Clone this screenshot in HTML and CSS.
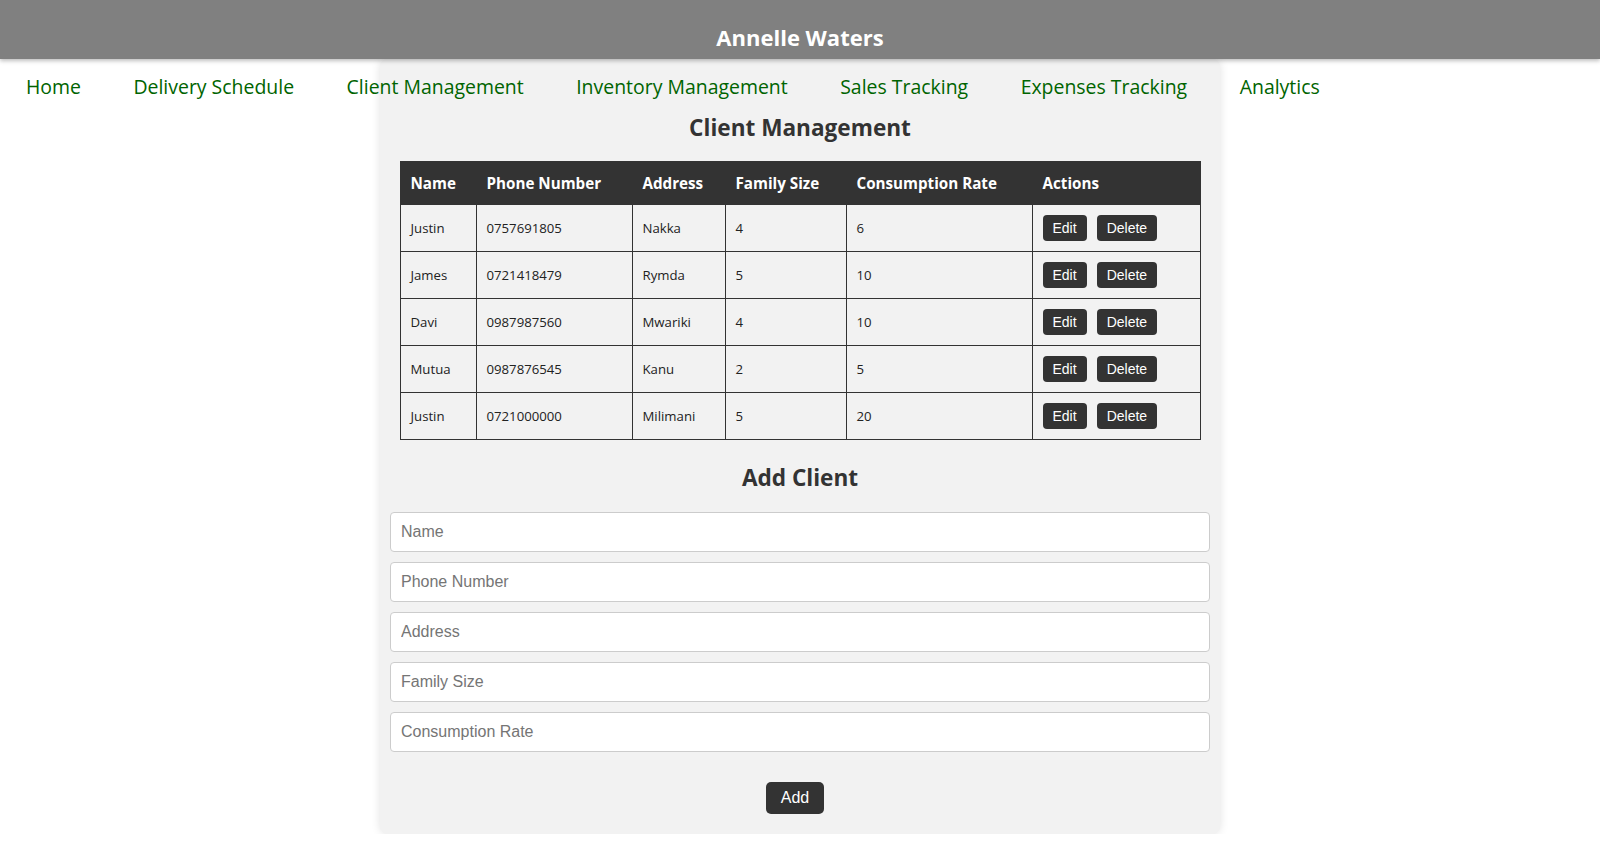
FILE: index.html
```html
<!DOCTYPE html>
<html lang="en">
<head>
<meta charset="utf-8">
<title>Annelle Waters - Client Management</title>
<link rel="stylesheet" href="styles.css">
</head>
<body>
<header class="site-header">
  <h1 class="site-title">Annelle Waters</h1>
</header>
<nav class="main-nav">
  <a href="#" class="nav-link">Home</a>
  <a href="#" class="nav-link">Delivery Schedule</a>
  <a href="#" class="nav-link">Client Management</a>
  <a href="#" class="nav-link">Inventory Management</a>
  <a href="#" class="nav-link">Sales Tracking</a>
  <a href="#" class="nav-link">Expenses Tracking</a>
  <a href="#" class="nav-link">Analytics</a>
</nav>
<main class="card">
  <h2 class="section-title">Client Management</h2>
  <table class="client-table">
    <colgroup>
      <col class="c-name"><col class="c-phone"><col class="c-addr"><col class="c-family"><col class="c-rate"><col class="c-actions">
    </colgroup>
    <thead>
      <tr><th>Name</th><th>Phone Number</th><th>Address</th><th>Family Size</th><th>Consumption Rate</th><th>Actions</th></tr>
    </thead>
    <tbody>
      <tr><td>Justin</td><td>0757691805</td><td>Nakka</td><td>4</td><td>6</td><td><button class="btn-small">Edit</button><button class="btn-small">Delete</button></td></tr>
      <tr><td>James</td><td>0721418479</td><td>Rymda</td><td>5</td><td>10</td><td><button class="btn-small">Edit</button><button class="btn-small">Delete</button></td></tr>
      <tr><td>Davi</td><td>0987987560</td><td>Mwariki</td><td>4</td><td>10</td><td><button class="btn-small">Edit</button><button class="btn-small">Delete</button></td></tr>
      <tr><td>Mutua</td><td>0987876545</td><td>Kanu</td><td>2</td><td>5</td><td><button class="btn-small">Edit</button><button class="btn-small">Delete</button></td></tr>
      <tr><td>Justin</td><td>0721000000</td><td>Milimani</td><td>5</td><td>20</td><td><button class="btn-small">Edit</button><button class="btn-small">Delete</button></td></tr>
    </tbody>
  </table>
  <h2 class="section-title add-title">Add Client</h2>
  <form class="client-form">
    <input class="field" type="text" placeholder="Name">
    <input class="field" type="text" placeholder="Phone Number">
    <input class="field" type="text" placeholder="Address">
    <input class="field" type="text" placeholder="Family Size">
    <input class="field" type="text" placeholder="Consumption Rate">
    <div class="form-actions"><button type="button" class="btn-add">Add</button></div>
  </form>
</main>
</body>
</html>
```
FILE: styles.css
```css
* { box-sizing: border-box; }
body {
  margin: 0;
  font-family: "Open Sans", "Noto Sans", sans-serif;
  color: #333;
  background: #fff;
}
.site-header {
  background: #808080;
  color: #fff;
  text-align: center;
  height: 59px;
  padding-top: 21px;
  box-shadow: 0 2px 4px rgba(0,0,0,0.25);
  position: relative;
  z-index: 1;
}
.site-title {
  margin: 0;
  font-size: 22px;
  line-height: 32px;
  font-weight: 700;
}
.main-nav {
  position: absolute;
  top: 59px;
  left: 0;
  display: flex;
  gap: 52.5px;
  padding: 14px 0 0 26px;
  z-index: 2;
}
.nav-link {
  color: #006400;
  text-decoration: none;
  font-size: 19.45px;
  line-height: 27px;
}
.card {
  width: 840px;
  margin: 0 auto;
  background: #f2f2f2;
  border-radius: 8px;
  padding: 10px 10px 20px;
  box-shadow: 0 0 10px rgba(0,0,0,0.12);
}
.section-title {
  text-align: center;
  font-size: 22.6px;
  line-height: 32px;
  margin: 43px 0 17px;
  color: #333;
}
.add-title { margin: 22px 0 18px; }
.client-table {
  width: 800px;
  margin: 0 auto;
  border-collapse: collapse;
  table-layout: fixed;
}
.c-name { width: 76px; }
.c-phone { width: 156px; }
.c-addr { width: 93px; }
.c-family { width: 121px; }
.c-rate { width: 186px; }
.c-actions { width: 168px; }
.client-table th, .client-table td {
  border: 1px solid #333;
  padding: 10px;
  text-align: left;
  white-space: nowrap;
}
.client-table th {
  background: #333;
  color: #fff;
  font-size: 15.2px;
  line-height: 22px;
  font-weight: 700;
}
.client-table td {
  font-size: 13.2px;
  line-height: 26px;
  height: 47px;
  color: #222;
}
.btn-small {
  font-family: "Liberation Sans", Arial, sans-serif;
  font-size: 14px;
  line-height: 16px;
  height: 26px;
  padding: 5px 10px;
  margin-right: 10px;
  background: #333;
  color: #fff;
  border: none;
  border-radius: 4px;
  vertical-align: top;
}
.client-form { display: flex; flex-direction: column; }
.field {
  width: 100%;
  height: 40px;
  margin: 0 0 10px;
  padding: 10px;
  border: 1px solid #ccc;
  border-radius: 4px;
  background: #fff;
  font-family: "Liberation Sans", Arial, sans-serif;
  font-size: 16px;
}
.field::placeholder { color: #757575; }
.form-actions {
  text-align: center;
  padding-right: 10px;
  margin-top: 20px;
}
.btn-add {
  font-family: "Liberation Sans", Arial, sans-serif;
  font-size: 16px;
  line-height: 18px;
  height: 32px;
  padding: 7px 15px;
  background: #333;
  color: #fff;
  border: none;
  border-radius: 5px;
}
```
